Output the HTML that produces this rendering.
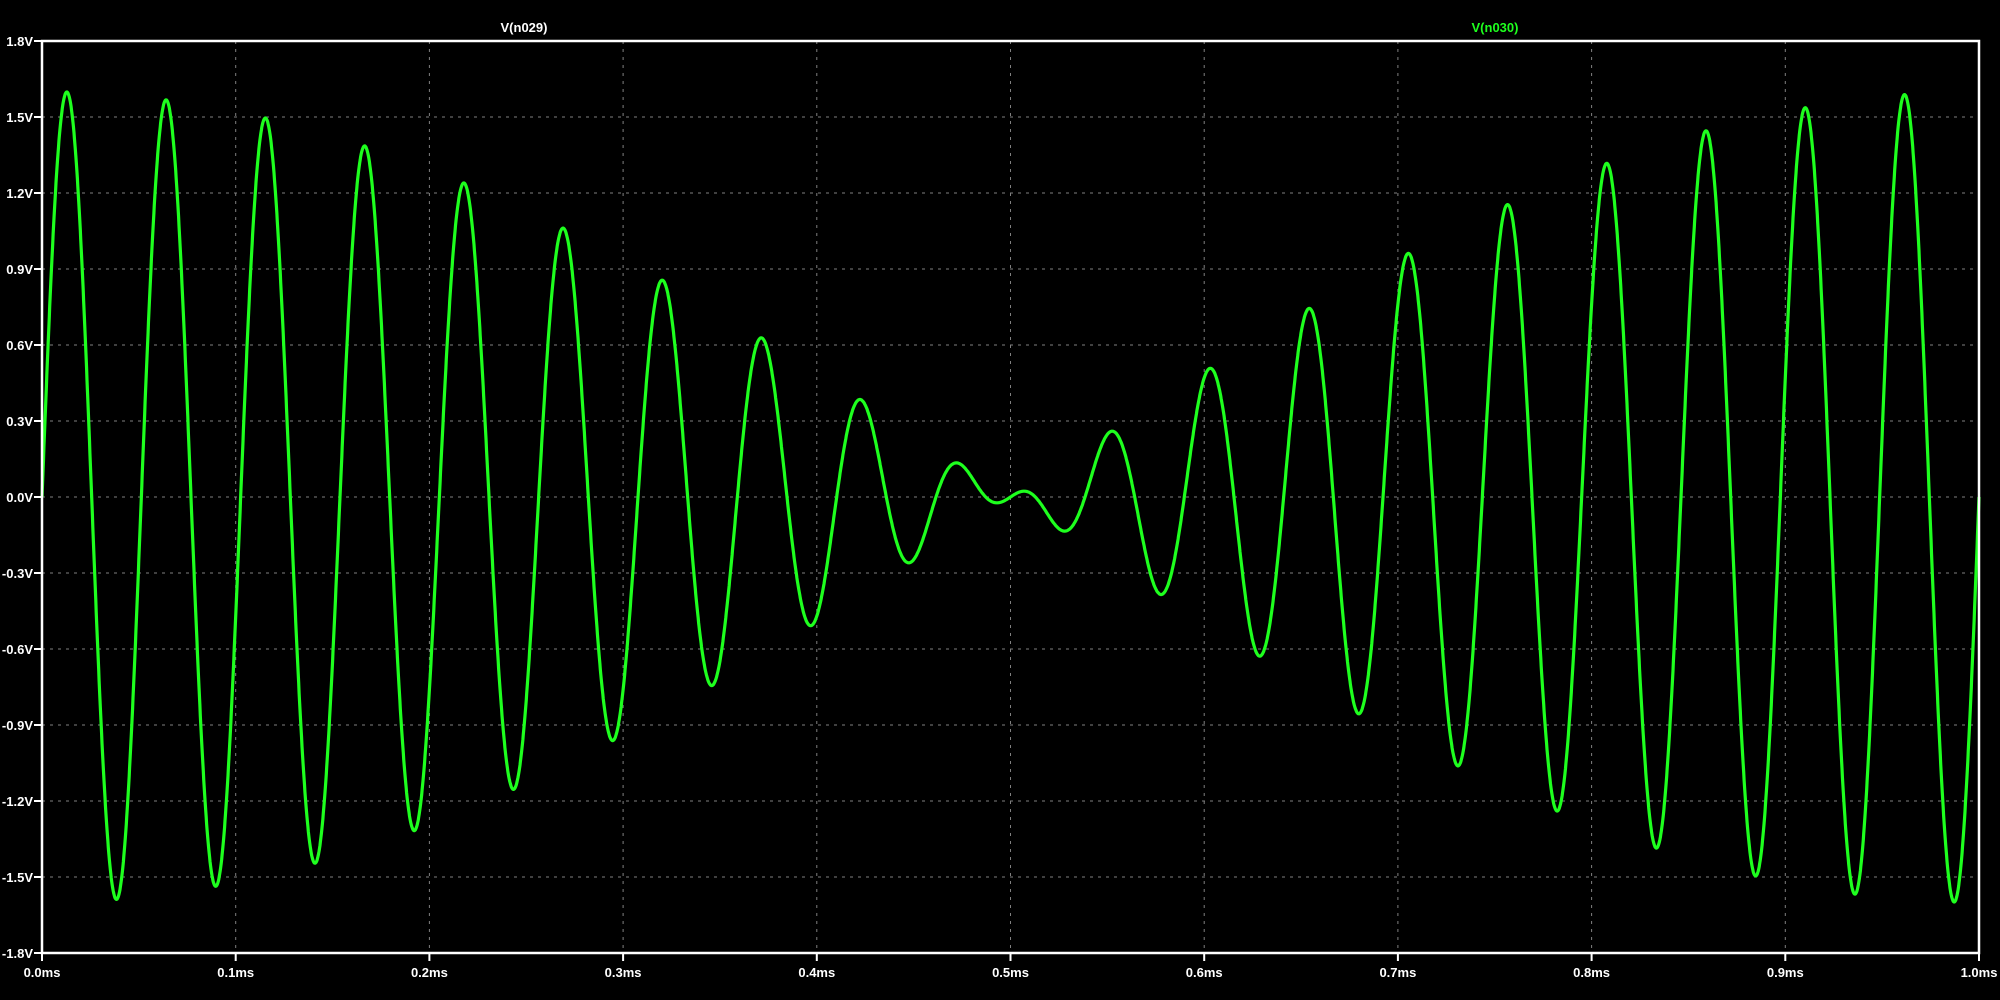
<!DOCTYPE html>
<html><head><meta charset="utf-8"><style>
html,body{margin:0;padding:0;background:#000;width:2000px;height:1000px;overflow:hidden}
svg{display:block}
text{font-family:"Liberation Sans",sans-serif;font-size:13px;font-weight:bold}
</style></head><body>
<svg id="s" width="2000" height="1000" viewBox="0 0 2000 1000">
<g id="grid" stroke="#808080" stroke-width="1" stroke-dasharray="3,5"></g>
<path id="w" fill="none" stroke="#1eff1e" stroke-width="3.2" stroke-linejoin="round"></path>
<rect x="42" y="41" width="1937" height="912" fill="none" stroke="#fff" stroke-width="2.5"/>
<g id="lab" fill="#fff"></g>
<text x="524" y="32" fill="#fff" text-anchor="middle">V(n029)</text>
<text x="1495" y="32" fill="#1eff1e" text-anchor="middle">V(n030)</text>
</svg>
<script>
var L=42,R=1979,T=41,B=953,ns="http://www.w3.org/2000/svg";
var g=document.getElementById('grid'),lab=document.getElementById('lab');
function el(p,tag,a,txt){var e=document.createElementNS(ns,tag);for(var k in a)e.setAttribute(k,a[k]);if(txt)e.textContent=txt;p.appendChild(e);return e;}
var yl=["1.8V","1.5V","1.2V","0.9V","0.6V","0.3V","0.0V","-0.3V","-0.6V","-0.9V","-1.2V","-1.5V","-1.8V"];
for(var i=0;i<=12;i++){var y=T+(B-T)*i/12;
 if(i>0&&i<12)el(g,'line',{x1:L,x2:R,y1:y,y2:y});
 el(lab,'line',{x1:L-8,x2:L,y1:y,y2:y,stroke:'#fff','stroke-width':2});
 el(lab,'text',{x:L-9,y:y+5,'text-anchor':'end'},yl[i]);}
for(var i=0;i<=10;i++){var x=L+(R-L)*i/10;
 if(i>0&&i<10)el(g,'line',{x1:x,x2:x,y1:T,y2:B});
 el(lab,'line',{x1:x,x2:x,y1:B,y2:B+8,stroke:'#fff','stroke-width':2});
 el(lab,'text',{x:x,y:B+24,'text-anchor':'middle'},(i/10).toFixed(1)+"ms");}
var d="",N=4000;
for(var i=0;i<=N;i++){var t=i/N*1e-3;
 var v=0.8*Math.sin(2*Math.PI*19000*t)+0.8*Math.sin(2*Math.PI*20000*t);
 var x=L+(R-L)*i/N,y=(T+B)/2-v*(B-T)/3.6;
 d+=(i?"L":"M")+x.toFixed(1)+" "+y.toFixed(1);}
document.getElementById('w').setAttribute('d',d);
</script>
</body></html>
